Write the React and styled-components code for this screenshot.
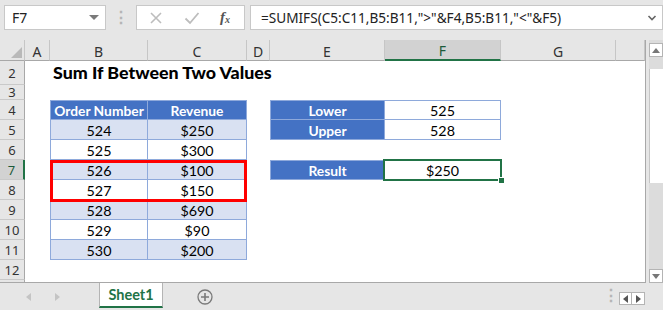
import React from "react";
import styled, { createGlobalStyle, css } from "styled-components";

const GREEN = "#217346";
const CHROME = "#e6e6e6";
const LINE = "#8ea9db";
const BLUE = "#4472c4";
const BAND = "#d9e1f2";

const GlobalStyle = createGlobalStyle`
  html, body { margin: 0; padding: 0; background: ${CHROME}; }
  body { font-family: "Noto Sans", "Open Sans", sans-serif; }
`;

const colWidths = [25, 25, 98, 99, 23, 115, 116, 115, 29];
const colNames = ["", "A", "B", "C", "D", "E", "F", "G", ""];
const rowNums = [2, 3, 4, 5, 6, 7, 8, 9, 10, 11, 12];

// cell contents keyed by column letter + row
const cells = {
  B2: { text: "Sum If Between Two Values", kind: "title" },
  B4: { text: "Order Number", kind: "head", top: true, left: true },
  C4: { text: "Revenue", kind: "head", top: true },
  E4: { text: "Lower", kind: "head", top: true, left: true },
  F4: { text: "525", kind: "plain", top: true },
  E5: { text: "Upper", kind: "head", left: true },
  F5: { text: "528", kind: "plain" },
  E7: { text: "Result", kind: "head", top: true, left: true },
  F7: { text: "$250", kind: "plain", top: true, selected: true },
};

const orders = [
  ["524", "$250"],
  ["525", "$300"],
  ["526", "$100"],
  ["527", "$150"],
  ["528", "$690"],
  ["529", "$90"],
  ["530", "$200"],
];
orders.forEach(([o, r], i) => {
  const row = 5 + i;
  const kind = i % 2 === 0 ? "band" : "plain";
  cells["B" + row] = { text: o, kind, left: true };
  cells["C" + row] = { text: r, kind };
});

const App = () => (
  <Page>
    <GlobalStyle />
    <FormulaBar>
      <NameBox>
        <span>F7</span>
        <Caret />
      </NameBox>
      <Grip>⋮</Grip>
      <FuncBox>
        <svg width="14" height="14" viewBox="0 0 14 14">
          <path d="M2 2 L12 12 M12 2 L2 12" stroke="#bdbdbd" strokeWidth="1.6" />
        </svg>
        <svg width="16" height="14" viewBox="0 0 16 14">
          <path d="M1.5 7.5 L6 12 L14.5 2" stroke="#bdbdbd" strokeWidth="1.8" fill="none" />
        </svg>
        <Fx>
          f<sub>x</sub>
        </Fx>
      </FuncBox>
      <FormulaBox>
        <span>=SUMIFS(C5:C11,B5:B11,"&gt;"&amp;F4,B5:B11,"&lt;"&amp;F5)</span>
        <svg width="10" height="8" viewBox="0 0 10 8">
          <path d="M1.5 2 L5 5.5 L8.5 2" stroke="#666" strokeWidth="1.6" fill="none" />
        </svg>
      </FormulaBox>
    </FormulaBar>

    <Middle>
      <Sheet>
        <Corner $row={1} $col={1}>
          <CornerTri />
        </Corner>
        {colNames.slice(1).map((name, i) => (
          <ColHead key={"h" + i} $row={1} $col={i + 2} $active={name === "F"}>
            {name}
          </ColHead>
        ))}
        {rowNums.map((n) => (
          <RowHead key={"r" + n} $row={n} $col={1} $active={n === 7}>
            {n}
          </RowHead>
        ))}
        {rowNums.flatMap((n) =>
          colNames.slice(1).map((name, i) => {
            const c = cells[name + n];
            if (!c) return null;
            return (
              <Cell
                key={name + n}
                $row={n}
                $col={i + 2}
                $kind={c.kind}
                $top={c.top}
                $left={c.left}
              >
                {c.text}
                {c.selected && (
                  <Selection>
                    <Handle />
                  </Selection>
                )}
              </Cell>
            );
          })
        )}
        <RedFrame $row={7} $col={3} />
        <Filler $row={13} $col={1} />
      </Sheet>
      <Gutter />
      <VScroll>
        <ScrollBtn>
          <svg width="8" height="5" viewBox="0 0 8 5">
            <path d="M0 5 L4 0 L8 5 Z" fill="#777" />
          </svg>
        </ScrollBtn>
        <Track>
          <Thumb />
        </Track>
        <ScrollBtn>
          <svg width="8" height="5" viewBox="0 0 8 5">
            <path d="M0 0 L8 0 L4 5 Z" fill="#777" />
          </svg>
        </ScrollBtn>
      </VScroll>
    </Middle>

    <TabBar>
      <TabNav>
        <svg width="5" height="8" viewBox="0 0 5 8">
          <path d="M5 0 L0 4 L5 8 Z" fill="#c4c4c4" />
        </svg>
        <svg width="5" height="8" viewBox="0 0 5 8">
          <path d="M0 0 L5 4 L0 8 Z" fill="#c4c4c4" />
        </svg>
      </TabNav>
      <Tab>Sheet1</Tab>
      <AddSheet>
        <svg width="16" height="16" viewBox="0 0 16 16">
          <circle cx="8" cy="8" r="7" stroke="#7a7a7a" strokeWidth="1.3" fill="none" />
          <path d="M8 4 V12 M4 8 H12" stroke="#7a7a7a" strokeWidth="1.6" />
        </svg>
      </AddSheet>
      <Spacer />
      <Grip $small>⋮</Grip>
      <HScrollBtns>
        <HBtn>
          <svg width="5" height="8" viewBox="0 0 5 8">
            <path d="M5 0 L0 4 L5 8 Z" fill="#555" />
          </svg>
        </HBtn>
        <HBtn>
          <svg width="5" height="8" viewBox="0 0 5 8">
            <path d="M0 0 L5 4 L0 8 Z" fill="#555" />
          </svg>
        </HBtn>
      </HScrollBtns>
    </TabBar>
  </Page>
);

export default App;

const Page = styled.div`
  width: 663px;
  height: 310px;
  display: flex;
  flex-direction: column;
  background: ${CHROME};
  overflow: hidden;
`;

const FormulaBar = styled.div`
  height: 40px;
  display: flex;
  align-items: flex-start;
  padding: 5px 0 0 4px;
  box-sizing: border-box;
`;

const Box = css`
  height: 25px;
  box-sizing: border-box;
  background: #fff;
  border: 1px solid #c8c8c8;
  display: flex;
  align-items: center;
`;

const NameBox = styled.div`
  ${Box};
  width: 102px;
  padding: 0 6px 0 7px;
  justify-content: space-between;
  font-size: 14px;
  color: #222;
`;

const Caret = styled.span`
  width: 0;
  height: 0;
  border-left: 5px solid transparent;
  border-right: 5px solid transparent;
  border-top: 5px solid #7a7a7a;
`;

const Grip = styled.div`
  width: ${({ $small }) => ($small ? "16px" : "30px")};
  text-align: center;
  color: #b5b5b5;
  font-size: 16px;
  line-height: 25px;
  font-weight: bold;
`;

const FuncBox = styled.div`
  ${Box};
  width: 109px;
  padding: 0 14px 0 12px;
  justify-content: space-between;
`;

const Fx = styled.span`
  font-family: "Liberation Serif", serif;
  font-style: italic;
  font-size: 15px;
  color: #555;
  font-weight: bold;
  & sub {
    font-size: 10px;
    vertical-align: -1px;
  }
`;

const FormulaBox = styled.div`
  ${Box};
  margin-left: 5px;
  width: 413px;
  padding: 0 5px 0 10px;
  justify-content: space-between;
  font-size: 13.6px;
  color: #222;
  white-space: nowrap;
`;

const Middle = styled.div`
  display: flex;
  height: 243px;
`;

const Sheet = styled.div`
  width: 646px;
  height: 243px;
  box-sizing: border-box;
  border-right: 1px solid #a8a8a8;
  border-bottom: 1px solid #a8a8a8;
  background: #fff;
  display: grid;
  grid-template-columns: ${colWidths.map((w) => w + "px").join(" ")};
  grid-template-rows: 21px 24px 15px repeat(9, 20px) 2px;
  font-family: Lato, "Liberation Sans", sans-serif;
  font-size: 14.3px;
  color: #000;
`;

const placed = css`
  grid-row: ${({ $row }) => $row};
  grid-column: ${({ $col }) => $col};
  box-sizing: border-box;
  min-width: 0;
`;

const Corner = styled.div`
  ${placed};
  background: ${CHROME};
  border-right: 1px solid #c6c6c6;
  border-bottom: 1px solid #a8a8a8;
  position: relative;
`;

const CornerTri = styled.div`
  position: absolute;
  right: 2px;
  bottom: 2px;
  width: 0;
  height: 0;
  border-left: 11px solid transparent;
  border-bottom: 11px solid #b9b9b9;
`;

const ColHead = styled.div`
  ${placed};
  background: ${({ $active }) => ($active ? "#d2d2d2" : CHROME)};
  border-right: 1px solid #c6c6c6;
  border-bottom: ${({ $active }) => ($active ? `2px solid ${GREEN}` : "1px solid #a8a8a8")};
  font-family: "Noto Sans", sans-serif;
  font-size: 14px;
  color: ${({ $active }) => ($active ? "#1d5a3a" : "#333")};
  display: flex;
  align-items: center;
  justify-content: center;
  padding-top: 2px;
`;

const RowHead = styled.div`
  ${placed};
  background: ${({ $active }) => ($active ? "#d2d2d2" : CHROME)};
  border-bottom: 1px solid #c9c9c9;
  border-right: ${({ $active }) => ($active ? `2px solid ${GREEN}` : "1px solid #a8a8a8")};
  font-family: "Noto Sans", sans-serif;
  font-size: 13px;
  line-height: 11px;
  color: ${({ $active }) => ($active ? "#1d5a3a" : "#333")};
  display: flex;
  align-items: center;
  justify-content: center;
  padding-top: 1px;
`;

const Filler = styled.div`
  ${placed};
  background: ${CHROME};
  border-right: 1px solid #a8a8a8;
`;

const kinds = {
  title: css`
    justify-content: flex-start;
    align-items: flex-end;
    padding: 0 0 2px 3px;
    font-size: 17.8px;
    font-weight: 900;
    white-space: nowrap;
    overflow: visible;
  `,
  head: css`
    background: ${BLUE};
    color: #fff;
    font-weight: 700;
    font-size: 13.8px;
  `,
  band: css`
    background: ${BAND};
  `,
  plain: css`
    background: #fff;
  `,
};

const Cell = styled.div`
  ${placed};
  position: relative;
  display: flex;
  align-items: center;
  justify-content: center;
  white-space: nowrap;
  padding-top: 1px;
  ${({ $kind }) => kinds[$kind]};
  ${({ $kind }) =>
    $kind !== "title" &&
    css`
      border-right: 1px solid ${LINE};
      border-bottom: 1px solid ${LINE};
    `}
  ${({ $top }) => $top && `border-top: 1px solid ${LINE};`}
  ${({ $left }) => $left && `border-left: 1px solid ${LINE};`}
`;

const Selection = styled.div`
  position: absolute;
  top: -2px;
  left: -2px;
  right: -2px;
  bottom: -2px;
  border: 2px solid ${GREEN};
  pointer-events: none;
`;

const Handle = styled.div`
  position: absolute;
  right: -5px;
  bottom: -5px;
  width: 5px;
  height: 5px;
  background: ${GREEN};
  border: 1px solid #fff;
`;

const RedFrame = styled.div`
  grid-row: ${({ $row }) => $row} / span 2;
  grid-column: ${({ $col }) => $col} / span 2;
  border: 3px solid #ff0000;
  margin-bottom: -2px;
  z-index: 2;
  pointer-events: none;
`;

const Gutter = styled.div`
  width: 3px;
  background: ${CHROME};
`;

const VScroll = styled.div`
  width: 14px;
  display: flex;
  flex-direction: column;
  padding-top: 3px;
  background: #dcdcdc;
`;

const ScrollBtn = styled.div`
  height: 14px;
  box-sizing: border-box;
  background: #fff;
  border: 1px solid #b4b4b4;
  display: flex;
  align-items: center;
  justify-content: center;
`;

const Track = styled.div`
  flex: 1;
  padding-top: 12px;
`;

const Thumb = styled.div`
  height: 114px;
  background: #fff;
  border-left: 1px solid #c6c6c6;
`;

const TabBar = styled.div`
  height: 27px;
  display: flex;
  align-items: flex-start;
  background: ${CHROME};
`;

const TabNav = styled.div`
  width: 99px;
  height: 27px;
  display: flex;
  align-items: center;
  gap: 24px;
  padding-left: 26px;
  box-sizing: border-box;
`;

const Tab = styled.div`
  width: 64px;
  height: 25px;
  box-sizing: border-box;
  background: #fff;
  border-left: 1px solid #b4b4b4;
  border-right: 1px solid #b4b4b4;
  border-bottom: 2px solid ${GREEN};
  color: ${GREEN};
  font-family: Lato, "Liberation Sans", sans-serif;
  font-weight: 700;
  font-size: 14.5px;
  display: flex;
  align-items: center;
  justify-content: center;
`;

const AddSheet = styled.div`
  margin-left: 34px;
  height: 27px;
  display: flex;
  align-items: center;
`;

const Spacer = styled.div`
  flex: 1;
`;

const HScrollBtns = styled.div`
  display: flex;
  margin: 9px 18px 0 0;
`;

const HBtn = styled.div`
  width: 13px;
  height: 13px;
  box-sizing: border-box;
  background: #fff;
  border: 1px solid #b4b4b4;
  display: flex;
  align-items: center;
  justify-content: center;
  & + & {
    border-left: none;
  }
`;
